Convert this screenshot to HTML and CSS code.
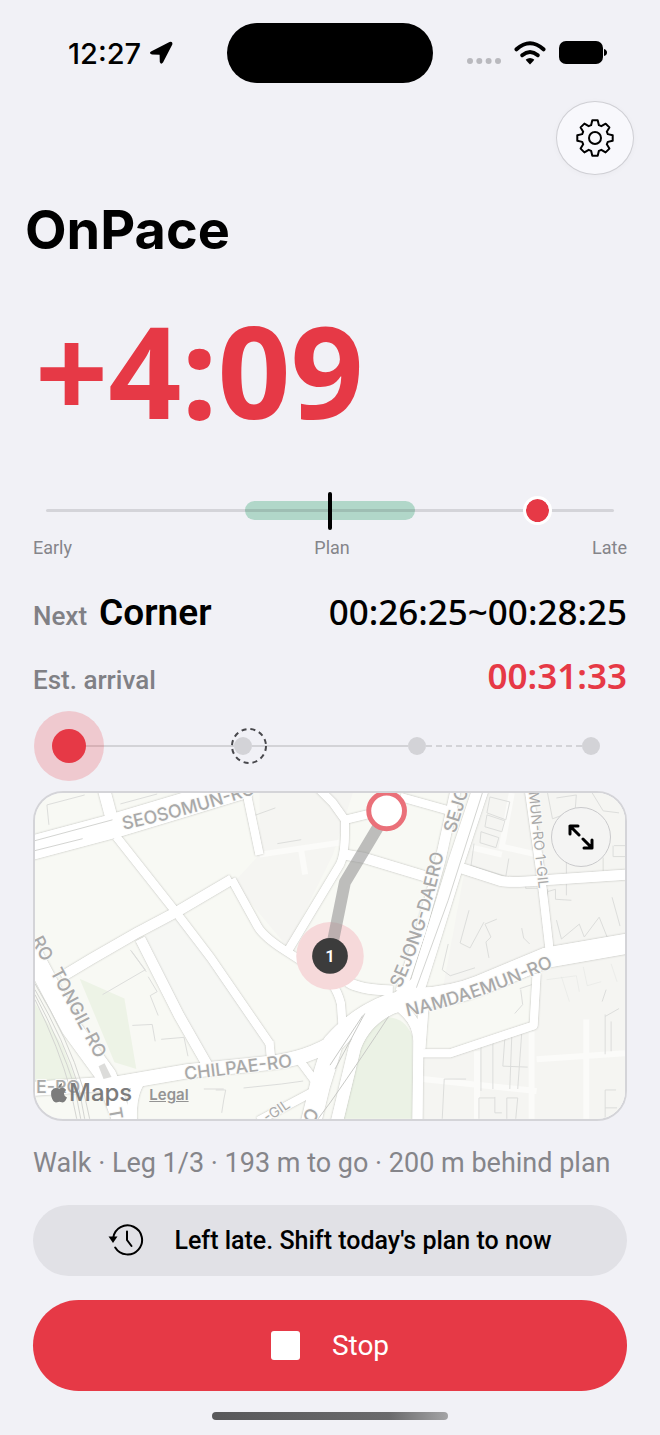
FILE: index.html
```html
<!DOCTYPE html>
<html lang="en">
<head>
  <meta charset="UTF-8">
  <meta name="viewport" content="width=device-width, initial-scale=1.0">
  <title>OnPace</title>
  <link rel="stylesheet" href="styles.css">
</head>
<body>
    <!-- Status bar -->
    <div class="status-bar">
        <div class="status-left">
            <span>12:27</span>
            <svg width="24" height="24" viewBox="0 0 24 24"><path d="M2 10.500 L20.500 1 Q24 0 23.300 3.500 L14 21.500 Q12 24 10.800 21 L10.600 13.700 L3 13.400 Q-0.500 12.300 2 10.500 Z"/></svg>
        </div>
        <div class="island"></div>
        <div class="status-right">
            <svg width="34" height="8" viewBox="0 0 34 8" class="signal"><circle cx="3" cy="4" r="3"/><circle cx="12.300" cy="4" r="3"/><circle cx="21.600" cy="4" r="3"/><circle cx="31" cy="4" r="3"/></svg>
            <svg width="32" height="24" viewBox="0 0 32 24" class="wifi"><path d="M2.500 8.300 Q16 -3.800 29.500 8.300"/><path d="M8.200 14.200 Q16 7.800 23.800 14.200"/><path class="fill" d="M11.800 18.600 Q16 15.200 20.200 18.600 Q20.500 19.400 16 23.400 Q11.500 19.400 11.800 18.600 Z"/></svg>
            <svg width="48" height="24" viewBox="0 0 48 24"><rect width="44" height="23" rx="7"/><path d="M45 8 Q48 9 48 11.500 Q48 14 45 15 Z"/></svg>
        </div>
    </div>

    <div class="toolbar">
        <button type="button" class="settings" aria-label="Settings">
            <svg width="40" height="40" viewBox="0 0 40 40"><path d="M17.300 2.300 H22.700 L23.900 7.200 L26.300 8.200 L30.700 5.700 L34.400 9.400 L31.800 13.700 L32.800 16.100 L37.700 17.300 V22.700 L32.800 23.900 L31.800 26.300 L34.400 30.600 L30.600 34.400 L26.300 31.800 L23.900 32.800 L22.700 37.700 H17.300 L16.100 32.800 L13.700 31.800 L9.400 34.400 L5.600 30.600 L8.200 26.300 L7.200 23.900 L2.300 22.700 V17.300 L7.200 16.100 L8.200 13.700 L5.600 9.400 L9.400 5.600 L13.700 8.200 L16.100 7.200 Z"/><circle cx="20" cy="20" r="6"/></svg>
        </button>
    </div>

    <h1>OnPace</h1>

    <div class="content">
        <div class="delta">+4:09</div>

        <!-- Pace gauge -->
        <div class="gauge">
            <div class="gauge-band"></div>
            <div class="gauge-track"></div>
            <div class="gauge-tick"></div>
            <div class="gauge-dot"></div>
        </div>
        <div class="gauge-labels">
            <span>Early</span>
            <span>Plan</span>
            <span>Late</span>
        </div>

        <div class="row next">
            <span class="label">Next</span>
            <strong>Corner</strong>
            <span class="time">00:26:25~00:28:25</span>
        </div>
        <div class="row arrival">
            <span class="label">Est. arrival</span>
            <span class="time late">00:31:33</span>
        </div>

        <!-- Legs -->
        <div class="steps">
            <span class="step current"></span>
            <span class="line"></span>
            <span class="step"><svg class="ring" width="38" height="38" viewBox="0 0 38 38"><circle cx="19" cy="19" r="17"/></svg></span>
            <span class="line"></span>
            <span class="step"></span>
            <span class="line dashed"></span>
            <span class="step"></span>
        </div>

        <!-- Map -->
        <div class="map">
            <svg class="map-view" viewBox="0 0 594 328" preserveAspectRatio="xMidYMid slice">
                <defs>
                    <g id="roads" fill="none" stroke-linejoin="round">
                        <path class="w24" d="M-10 57 L80 33 L150 12 L215 -8"/>
                        <path class="w12" d="M69 -5 L77 25"/>
                        <path class="w8" d="M82 44 L142 120 L177 166 L236 252"/>
                        <path class="w10" d="M198 87 L142 120 L104 140 L57 167 L27 185"/>
                        <path class="w8" d="M198 87 L224 134 Q230 145 254 160 L282 178 Q302 188 308 212 L310 240"/>
                        <path class="w8" d="M254 160 L307 72 Q313 60 312 27 L300 10 L285 -5"/>
                        <path class="w8" d="M312 27 L345 19 M368 4 L425 20"/>
                        <path class="w10" d="M312 62 L330 65 L400 86 M424 74 L467 88 Q475 91 510 88 L600 82"/>
                        <path class="w10" d="M424 -5 L408 68 L388 140 L368 200"/>
                        <path class="w16" d="M449 -5 L424 70 L398 154 L386 192 L364 210"/>
                        <path class="w20" d="M600 151 L514 166 L447 194 Q420 205 388 206 L358 212 Q325 224 300 252 L287 294 L277 335"/>
                        <path class="w12" d="M372 212 Q335 222 322 256 L303 335"/>
                        <path class="w10" d="M315 190 Q325 198 360 199"/>
                        <path class="w10" d="M364 213 Q386 228 386 250 L385 335 M392 204 L388 257"/>
                        <path class="w8" d="M388 262 L418 262 L502 234 L505 182"/>
                        <path class="w8" d="M497 -5 L510 88 L519 166"/>
                        <path class="w8" d="M212 -5 L226 62"/>
                        <path class="w20" d="M-8 152 L37 237 L72 285 L90 335"/>
                        <path class="w10" d="M106 147 L145 224 L177 280"/>
                        <path class="w14" d="M-5 298 L84 292 L154 280 L234 272 Q275 268 305 248"/>
                        <path class="w8" d="M225 330 L287 297 L267 270 M236 250 L238 272"/>
                        <path class="w10" d="M110 285 Q95 300 98 335"/>
                    </g>
                </defs>
                <rect width="594" height="328" fill="#f8f9f4"/>
                <path d="M226 0 H594 V328 H390 V262 L420 262 L505 234 V184 L410 200 L447 0 H320 L300 62 L254 155 L200 90 L226 62 Z" fill="#f5f5f2"/>
                <path d="M106 147 L142 124 L234 250 L234 270 L170 275 L110 165 Z" fill="#f6f7f4"/>
                <path d="M45 187 L90 207 L102 278 L80 271 Z M0 212 L28 255 L42 292 H0 Z" fill="#edf3e6"/>
                <path d="M324 250 L354 226 Q372 225 380 245 L380 328 H308 Z" fill="#ebf2e5"/>
                <g fill="none" stroke="#fbfbf9" stroke-width="6">
                    <path d="M226 62 L307 50 M480 0 L470 54 L510 63 M500 240 V328 M445 260 V328 M390 288 L505 300 M505 268 L594 262 M555 228 V328 M440 55 L470 62 M268 58 L272 82"/>
                </g>
                <!-- Buildings -->
                <g class="buildings">
                    <path d="M14 32 L12 12 L50 2 M86 11 L123 1 M2 59 L48 46 M245 -5 L305 -2 M220 23 L242 15 M244 51 L268 47"/>
                    <path d="M97 159 L111 178 L68 203 M114 185 L123 200 L116 204 L124 224 M98 234 L118 233 L121 250 M127 248 L150 246 L154 265 M96 158 L112 180"/>
                    <path d="M182 299 L192 299 L190 309 L188 322 M210 297 L248 293 L270 290 M170 298 H190"/>
                    <path d="M458 4 L478 9 L474 27 L455 20 Z M455 22 L473 28 L470 39 L453 34 Z M449 39 L467 45 L464 55 L448 50 Z M442 51 L439 73 L474 84 L477 66 M516 0 L521 26 L548 16 M525 5 L545 2 L544 15 M561 0 L572 18 L588 20 M583 53 H594 M582 53 V64 H594 M535 62 V82 M572 65 V80"/>
                    <path d="M437 118 L428 151 L438 156 L452 130 M465 127 L453 132 L459 145 L454 150 L457 166 M490 136 L492 146 L498 152 M581 105 L589 134 M535 91 V103 M516 97 V108 M525 128 L530 147 L548 132 L553 145 L568 125 L578 150 M416 152 L410 178 L418 184 L443 176 M494 87 V96 H510 V101 L524 97 V107 L540 108"/>
                    <path d="M488 197 L500 193 M489 198 L491 213 L483 222 M575 198 L571 210 M574 225 L588 217 M574 223 V263 M580 230 V260"/>
                    <path d="M410 328 L412 288 H434 M449 252 V300 M461 250 V298 M473 247 L471 275 L496 276 M480 245 L478 298 M490 242 L486 298 M447 328 V307 H463 M475 328 V307 H486 L484 328 M463 306 V322 H470 M574 328 V299 H585 M574 317 H586"/>
                    <path d="M515 188 L545 184 L548 200 M530 185 L538 210 M552 175 L556 194 L570 190 M580 172 L586 190" opacity=".4"/>
                </g>
                <use href="#roads" class="casing"/>
                <use href="#roads" class="surface"/>
                <!-- Railway -->
                <g fill="none" stroke="#d3d4d1" stroke-width="1">
                    <path d="M0 198 Q30 250 44 296 L50 328 M0 203 Q26 252 40 296 L46 328 M0 208 Q24 256 36 300 L42 328 M0 192 Q34 248 48 296 L55 328"/>
                    <path d="M452 -5 L416 108 L384 196 M0 48 L78 27 M0 58 L48 46"/>
                    <path d="M356 225 Q332 262 297 312 L285 328 M332 222 L302 278 M330 224 L297 274" stroke="#c8c9c6"/>
                </g>
                <path d="M64 275 L70 272 L77 286 L69 288 Z" fill="#dcdcda"/>
                <!-- Street names -->
                <path id="sejong" d="M368 197 Q393 145 413 55" fill="none"/>
                <path id="namdaemun" d="M375 225 Q445 210 528 172" fill="none"/>
                <path id="seosomun" d="M89 37 Q160 22 230 -2" fill="none"/>
                <g class="street">
                    <text><textPath href="#seosomun">SEOSOMUN-RO</textPath></text>
                    <text><textPath href="#sejong">SEJONG-DAERO</textPath></text>
                    <text><textPath href="#namdaemun">NAMDAEMUN-RO</textPath></text>
                    <text transform="translate(423 41) rotate(-73)">SEJO</text>
                    <text transform="translate(151 289) rotate(-7)">CHILPAE-RO</text>
                    <text transform="translate(15 180) rotate(62)">TONGIL-RO</text>
                    <text transform="translate(-4 148) rotate(62)">RO</text>
                    <text transform="translate(74 318) rotate(80)">T</text>
                    <text x="1" y="302">E-RO</text>
                    <text transform="translate(280 334) rotate(-60)">O</text>
                    <text class="small" transform="translate(234 332) rotate(-34)">-GIL</text>
                    <text class="small" transform="translate(497 -1) rotate(84)">MUN-RO 1-GIL</text>
                </g>
                <!-- Route -->
                <circle cx="297" cy="164" r="34" fill="#f6d9da"/>
                <path d="M348 30 L312 90 L297 164" fill="none" stroke="#8c8c8c" stroke-opacity=".55" stroke-width="12" stroke-linejoin="round"/>
                <circle cx="354" cy="18" r="18" fill="#fff" stroke="#ea7079" stroke-width="5"/>
                <circle cx="297" cy="164" r="18" fill="#3c3c3c"/>
                <text class="pin" x="297" y="170" text-anchor="middle">1</text>
            </svg>
            <button type="button" class="expand" aria-label="Expand map">
                <svg width="26" height="26" viewBox="0 0 26 26"><path d="M2 10 V2 H10 M2 2 L11 11 M24 16 V24 H16 M24 24 L15 15"/></svg>
            </button>
            <div class="credits">
                <svg width="16" height="20" viewBox="0 0 16 20"><path d="M11 0 Q11.200 3.600 7.800 4.600 Q7.600 1.200 11 0 Z M8.200 5.800 Q9.800 4.700 11.600 4.800 Q14 5 15.200 6.900 Q12.800 8.500 13 11 Q13.200 13.500 16 14.600 Q14 19.400 11.800 19.600 L8.400 18.800 L5 19.600 Q2 19.300 .4 13.800 Q-.8 7.500 2.600 5.500 Q4.800 4.200 8.200 5.800 Z"/></svg>
                <span class="maps">Maps</span>
                <a href="#" class="legal">Legal</a>
            </div>
        </div>

        <p class="summary">Walk · Leg 1/3 · 193 m to go · 200 m behind plan</p>

        <button type="button" class="btn btn-shift">
            <svg width="36" height="34" viewBox="0 0 36 34"><path d="M5.200 15 A14.500 14.500 0 1 1 7.200 24.500"/><path d="M19 8.500 V17 L23.500 23"/><path class="fill" d="M0.500 13.500 H9.500 L5 20 Z"/></svg>
            Left late. Shift today's plan to now
        </button>
        <button type="button" class="btn btn-stop">
            <span class="stop-icon"></span>
            Stop
        </button>
    </div>

    <div class="home-indicator"></div>
</body>
</html>
```

FILE: styles.css
```css
body {
    margin: 0;
    background-color: #f1f1f6;
    color: #000;
    font-family: Roboto, "Noto Sans", sans-serif;
}

button {
    padding: 0;
    border: none;
    font-family: inherit;
    color: inherit;
    cursor: pointer;
}

svg {
    display: block;
}

/* Status bar */
.status-bar {
    display: grid;
    grid-template-columns: 1fr 206px 1fr;
    align-items: center;
    padding-top: 23px;
}

.status-left {
    display: flex;
    align-items: center;
    gap: 8px;
    padding-left: 68px;
    font-family: Inter, sans-serif;
    font-size: 29px;
    font-weight: 500;
}

.island {
    height: 60px;
    border-radius: 30px;
    background-color: #000;
}

.status-right {
    display: flex;
    align-items: center;
    justify-content: flex-end;
    gap: 13px;
    padding-right: 53px;
}

.signal {
    align-self: flex-end;
    fill: #b9b9be;
}

.wifi {
    fill: none;
    stroke: #000;
    stroke-width: 4;
    stroke-linecap: round;
}

.wifi .fill {
    fill: #000;
    stroke: none;
}

/* Header */
.toolbar {
    display: flex;
    justify-content: flex-end;
    padding: 18px 26px 0;
}

.settings {
    display: flex;
    align-items: center;
    justify-content: center;
    width: 78px;
    height: 74px;
    border: 1px solid #cfcfd4;
    border-radius: 50%;
    background-color: #f8f8fc;
    box-shadow: 0 1px 6px rgba(0, 0, 0, 0.03);
}

.settings svg {
    fill: none;
    stroke: #000;
    stroke-width: 2;
    stroke-linejoin: round;
}

h1 {
    margin: 23px 25px 0;
    font-family: Inter, sans-serif;
    font-size: 54px;
    font-weight: 700;
    line-height: 64px;
}

.content {
    display: flex;
    flex-direction: column;
    padding: 48px 33px 0;
}

.delta {
    padding-left: 2px;
    color: #e63946;
    font-family: "Noto Sans", sans-serif;
    font-size: 128px;
    font-weight: 700;
    line-height: 120px;
}

/* Gauge */
.gauge {
    position: relative;
    height: 38px;
    margin: 62px 13px 0;
}

.gauge-track {
    position: absolute;
    top: 17px;
    left: 0;
    right: 0;
    height: 3px;
    border-radius: 2px;
    background-color: rgba(60, 60, 67, 0.16);
}

.gauge-band {
    position: absolute;
    top: 9px;
    left: 35%;
    width: 30%;
    height: 19px;
    border-radius: 10px;
    background-color: #b1d7c9;
}

.gauge-tick {
    position: absolute;
    top: 0;
    left: 50%;
    width: 4px;
    height: 38px;
    margin-left: -2px;
    border-radius: 2px;
    background-color: #000;
}

.gauge-dot {
    position: absolute;
    top: 4px;
    left: 87%;
    width: 23px;
    height: 23px;
    margin-left: -17px;
    border: 3px solid #fff;
    border-radius: 50%;
    background-color: #e63946;
    background-clip: padding-box;
}

.gauge-labels {
    display: flex;
    justify-content: space-between;
    margin-top: 6px;
    color: #85858a;
    font-size: 18px;
    line-height: 24px;
}

/* Next stop and arrival */
.row {
    display: flex;
    align-items: baseline;
    height: 44px;
    line-height: 44px;
}

.next {
    margin-top: 30px;
}

.arrival {
    margin-top: 20px;
}

.label {
    color: #808085;
    font-size: 26px;
    font-weight: 500;
}

.row strong {
    margin-left: 12px;
    font-size: 37px;
    font-weight: 600;
}

.time {
    margin-left: auto;
    font-family: "Noto Sans", sans-serif;
    font-size: 35px;
    font-weight: 500;
}

.late {
    color: #e63946;
    font-weight: 600;
}

/* Legs */
.steps {
    display: flex;
    align-items: center;
    height: 70px;
    margin-top: 13px;
    padding: 0 27px;
}

.step {
    position: relative;
    width: 18px;
    height: 18px;
    border-radius: 50%;
    background-color: #d3d3d7;
}

.line {
    flex: 1;
    border-top: 2px solid #d3d3d7;
}

.line.dashed {
    border-top-style: dashed;
}

.current::before {
    content: "";
    position: absolute;
    inset: -8px;
    border-radius: 50%;
    background-color: #e63946;
    box-shadow: 0 0 0 18px rgba(230, 57, 70, 0.22);
}

.ring {
    position: absolute;
    top: -10px;
    left: -4px;
    fill: none;
    stroke: #48484c;
    stroke-width: 2;
    stroke-dasharray: 5 4;
}

/* Map */
.map {
    position: relative;
    margin-top: 10px;
    border: 2px solid #d4d4d8;
    border-radius: 30px;
    overflow: hidden;
}

.map-view {
    width: 100%;
    height: auto;
}

.w8 { stroke-width: 8px; }
.w10 { stroke-width: 10px; }
.w12 { stroke-width: 12px; }
.w14 { stroke-width: 14px; }
.w16 { stroke-width: 16px; }
.w20 { stroke-width: 20px; }
.w24 { stroke-width: 24px; }

.casing {
    stroke: #fff;
    filter: drop-shadow(0 0 1px #b4b5b0);
}

.surface {
    stroke: #fff;
}

.buildings {
    fill: none;
    stroke: #dcdddb;
    stroke-width: 1;
}

.street {
    fill: #a9a9a9;
    stroke: #fafaf8;
    stroke-width: 2;
    paint-order: stroke;
    font-family: Inter, sans-serif;
    font-size: 18px;
    font-weight: 500;
}

.street .small {
    font-size: 14px;
    font-weight: 400;
}

.pin {
    fill: #fff;
    font-size: 17px;
    font-weight: 600;
}

.expand {
    position: absolute;
    top: 14px;
    right: 14px;
    display: flex;
    align-items: center;
    justify-content: center;
    width: 60px;
    height: 60px;
    border: 1px solid #c9c9cb;
    border-radius: 50%;
    background-color: #f4f4f3;
}

.expand svg {
    fill: none;
    stroke: #000;
    stroke-width: 3;
    stroke-linecap: round;
    stroke-linejoin: round;
}

.credits {
    position: absolute;
    left: 16px;
    bottom: 8px;
    display: flex;
    align-items: center;
    color: #7c7c7c;
    font-family: Inter, sans-serif;
    line-height: 32px;
}

.credits svg {
    fill: #7c7c7c;
}

.maps {
    margin-left: 2px;
    font-size: 24px;
    font-weight: 500;
}

.legal {
    margin: 4px 0 0 17px;
    color: #949494;
    font-size: 15px;
    font-weight: 600;
}

.summary {
    margin: 24px 0 0;
    color: #85858a;
    font-size: 27px;
    line-height: 36px;
    white-space: nowrap;
}

/* Actions */
.btn {
    display: flex;
    align-items: center;
    justify-content: center;
    border-radius: 46px;
}

.btn-shift {
    gap: 30px;
    height: 71px;
    margin-top: 24px;
    background-color: #e1e1e6;
    font-size: 25px;
    font-weight: 500;
}

.btn-shift svg {
    fill: none;
    stroke: #000;
    stroke-width: 2;
    stroke-linecap: round;
}

.btn-shift .fill {
    fill: #000;
    stroke: none;
}

.btn-stop {
    gap: 32px;
    height: 91px;
    margin-top: 24px;
    background-color: #e63946;
    color: #fff;
    font-size: 28px;
}

.stop-icon {
    width: 29px;
    height: 29px;
    border-radius: 3px;
    background-color: #fff;
}

.home-indicator {
    width: 236px;
    height: 8px;
    margin: 21px auto 13px;
    border-radius: 4px;
    background: linear-gradient(to right, #58585a, #6a6a6c 75%, #a4a4a6);
}
```
